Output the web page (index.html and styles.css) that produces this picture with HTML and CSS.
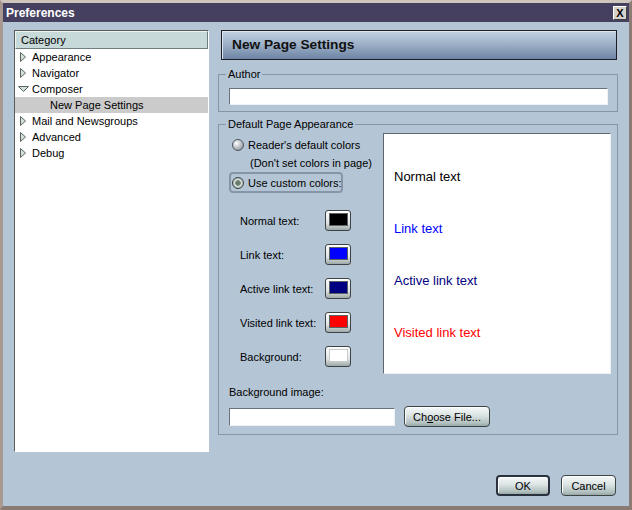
FILE: index.html
```html
<!DOCTYPE html>
<html>
<head>
<meta charset="utf-8">
<title>Preferences</title>
<link rel="stylesheet" href="styles.css">
</head>
<body>
<div class="window">
  <div class="titlebar">
    <span class="title">Preferences</span>
    <span class="close">X</span>
  </div>
  <div class="client">
    <div class="main">
      <div class="tree">
        <div class="tree-head">Category</div>
        <div class="row"><span class="twisty"><svg width="11" height="10" viewBox="0 0 11 10"><polygon points="2.5,0.5 7.5,5 2.5,9.5" fill="#d4ddd6" stroke="#56665c"/></svg></span><span>Appearance</span></div>
        <div class="row"><span class="twisty"><svg width="11" height="10" viewBox="0 0 11 10"><polygon points="2.5,0.5 7.5,5 2.5,9.5" fill="#d4ddd6" stroke="#56665c"/></svg></span><span>Navigator</span></div>
        <div class="row"><span class="twisty"><svg width="11" height="10" viewBox="0 0 11 10"><polygon points="0.5,2.5 10.5,2.5 5.5,7.5" fill="#d4ddd6" stroke="#56665c"/></svg></span><span>Composer</span></div>
        <div class="row child selected"><span>New Page Settings</span></div>
        <div class="row"><span class="twisty"><svg width="11" height="10" viewBox="0 0 11 10"><polygon points="2.5,0.5 7.5,5 2.5,9.5" fill="#d4ddd6" stroke="#56665c"/></svg></span><span>Mail and Newsgroups</span></div>
        <div class="row"><span class="twisty"><svg width="11" height="10" viewBox="0 0 11 10"><polygon points="2.5,0.5 7.5,5 2.5,9.5" fill="#d4ddd6" stroke="#56665c"/></svg></span><span>Advanced</span></div>
        <div class="row"><span class="twisty"><svg width="11" height="10" viewBox="0 0 11 10"><polygon points="2.5,0.5 7.5,5 2.5,9.5" fill="#d4ddd6" stroke="#56665c"/></svg></span><span>Debug</span></div>
      </div>
      <div class="pane">
        <div class="pane-head">New Page Settings</div>
        <fieldset class="group author">
          <legend>Author</legend>
          <div class="field author-field"></div>
        </fieldset>
        <fieldset class="group appearance">
          <legend>Default Page Appearance</legend>
          <div class="appearance-top">
            <div class="colors">
              <div class="radio-row first"><span class="radio"></span><span>Reader's default colors</span></div>
              <div class="note">(Don't set colors in page)</div>
              <div class="radio-row custom"><span class="radio on"></span><span>Use custom colors:</span></div>
              <div class="swatches">
                <span class="swatch-label">Normal text:</span><span class="swatch"><span class="chip chip-black"></span></span>
                <span class="swatch-label">Link text:</span><span class="swatch"><span class="chip chip-blue"></span></span>
                <span class="swatch-label">Active link text:</span><span class="swatch"><span class="chip chip-navy"></span></span>
                <span class="swatch-label">Visited link text:</span><span class="swatch"><span class="chip chip-red"></span></span>
                <span class="swatch-label">Background:</span><span class="swatch"><span class="chip chip-white"></span></span>
              </div>
            </div>
            <div class="preview">
              <div class="pv pv-normal">Normal text</div>
              <div class="pv pv-link">Link text</div>
              <div class="pv pv-active">Active link text</div>
              <div class="pv pv-visited">Visited link text</div>
            </div>
          </div>
          <div class="bg-label">Background image:</div>
          <div class="bg-row">
            <div class="field bg-field"></div>
            <div class="btn choose">Ch<u>o</u>ose File...</div>
          </div>
        </fieldset>
      </div>
    </div>
    <div class="footer">
      <div class="btn ok">OK</div>
      <div class="btn cancel">Cancel</div>
    </div>
  </div>
</div>
</body>
</html>
```

FILE: styles.css
```css
* { box-sizing: border-box; }
html, body { margin: 0; padding: 0; }
body {
  font-family: "Liberation Sans", Arial, sans-serif;
  font-size: 11px;
  color: #000;
  background: #b4c5d5;
}
.window {
  width: 632px;
  height: 510px;
  border-style: solid;
  border-width: 3px 3px 4px 3px;
  border-color: #cfc6be #8c7c76 #8a7a74 #a99890;
  display: flex;
  flex-direction: column;
  background: #b4c5d5;
}
.titlebar {
  height: 19px;
  background: #464060;
  display: flex;
  align-items: center;
  justify-content: space-between;
  padding: 0 2px 0 3px;
}
.title {
  color: #fff;
  font-weight: bold;
  font-size: 12px;
}
.close {
  width: 14px;
  height: 14px;
  background: #d6d2ca;
  border-top: 1px solid #fff;
  border-left: 1px solid #fff;
  border-right: 1px solid #404040;
  border-bottom: 1px solid #404040;
  font-weight: bold;
  font-size: 11px;
  line-height: 12px;
  text-align: center;
  color: #000;
}
.client {
  flex: 1;
  padding: 8px 11px 10px 11px;
  display: flex;
  flex-direction: column;
}
.main {
  height: 422px;
  display: flex;
  gap: 9px;
}
.tree {
  width: 195px;
  background: #fff;
  border-top: 1px solid #5c5c5c;
  border-left: 1px solid #5c5c5c;
  border-right: 1px solid #fff;
  border-bottom: 1px solid #fff;
}
.tree-head {
  height: 18px;
  background: #c8d9d9;
  border: 1px solid #6f7f7f;
  border-top-color: #eef4f4;
  border-left-color: #eef4f4;
  line-height: 16px;
  padding-left: 5px;
  font-size: 11px;
}
.row {
  height: 16px;
  display: flex;
  align-items: center;
  white-space: nowrap;
}
.twisty {
  width: 11px;
  height: 10px;
  margin-left: 3px;
  margin-right: 3px;
  display: flex;
}
.row.child { padding-left: 35px; }
.row.selected { background: #cbcbcb; }
.pane {
  width: 400px;
  display: flex;
  flex-direction: column;
}
.pane-head {
  height: 30px;
  margin: 0 1px 0 3px;
  border: 1px solid #1c1c22;
  background: linear-gradient(#c3d2e2, #9fb2c8 45%, #6d84a4);
  box-shadow: inset 1px 1px 0 #dbe6f0;
  font-weight: bold;
  font-size: 13.7px;
  color: #111;
  line-height: 28px;
  padding-left: 10px;
}
.group {
  margin: 0;
  border: 1px solid #8696a6;
  min-width: 0;
}
.group legend {
  padding: 0 2px;
  margin-left: -3px;
  line-height: 14px;
  font-size: 11px;
}
.author {
  margin-top: 7px;
  padding: 7px 9px 6px 10px;
}
.field {
  background: #fff;
  border-top: 1px solid #68727e;
  border-left: 1px solid #68727e;
  border-right: 1px solid #eef2f6;
  border-bottom: 1px solid #eef2f6;
}
.author-field { height: 17px; }
.appearance {
  margin-top: 5px;
  padding: 2px 5px 7px 10px;
}
.appearance-top {
  display: flex;
}
.colors {
  width: 154px;
  display: flex;
  flex-direction: column;
}
.radio-row {
  display: flex;
  align-items: center;
  gap: 4px;
  border: 2px solid transparent;
  padding-left: 1px;
  white-space: nowrap;
}
.radio-row.first {
  margin-top: 2px;
  height: 19px;
}
.radio-row.custom {
  width: 114px;
  height: 21px;
  border-color: #8696a8;
  border-radius: 4px;
}
.radio {
  width: 12px;
  height: 12px;
  border-radius: 50%;
  border: 1px solid #4e565e;
  background: radial-gradient(circle at 35% 32%, #ffffff 0, #d6dadc 30%, #9aa2a8 75%, #6a7278 100%);
  flex: none;
}
.radio.on {
  border-color: #3a4248;
  background: radial-gradient(circle, #5e7062 0, #76887a 35%, #dfe6e2 45%, #b0bab6 70%, #505a62 100%);
}
.note {
  height: 18px;
  line-height: 18px;
  padding-left: 21px;
  white-space: nowrap;
}
.swatches {
  margin-top: 17px;
  padding-left: 11px;
  display: grid;
  grid-template-columns: 85px 26px;
  grid-auto-rows: 21px;
  row-gap: 13px;
  align-items: center;
}
.swatch-label { white-space: nowrap; }
.swatch {
  width: 26px;
  height: 21px;
  border: 1px solid #3e4446;
  border-radius: 3px;
  background: linear-gradient(#ffffff, #e2e6e6 60%, #9ea8a8);
  padding: 2px 2px 4px 3px;
  display: flex;
}
.chip {
  flex: 1;
  border: 1px solid #5a6064;
}
.chip-black { background: #000; }
.chip-blue { background: #0000ff; }
.chip-navy { background: #000080; }
.chip-red { background: #ff0000; }
.chip-white { background: #fff; border-color: #c8cccc; }
.preview {
  width: 228px;
  height: 241px;
  background: #fff;
  border-top: 1px solid #5e6670;
  border-left: 1px solid #5e6670;
  border-right: 1px solid #eef2f6;
  border-bottom: 1px solid #eef2f6;
  padding: 35px 0 0 10px;
  display: flex;
  flex-direction: column;
  gap: 36px;
}
.pv {
  font-size: 13px;
  line-height: 16px;
  white-space: nowrap;
}
.pv-normal { color: #000; }
.pv-link { color: #0000ff; }
.pv-active { color: #000080; }
.pv-visited { color: #ff0000; }
.bg-label {
  margin-top: 11px;
  line-height: 14px;
}
.bg-row {
  margin-top: 7px;
  height: 21px;
  display: flex;
  align-items: center;
  gap: 9px;
}
.bg-field {
  width: 166px;
  height: 18px;
}
.btn {
  height: 21px;
  border: 1px solid #3c4446;
  border-radius: 4px;
  background: linear-gradient(#f6f9f9, #dbe3e3 45%, #b2c0c0 85%, #98a6a6);
  box-shadow: inset 1px 1px 0 #ffffff;
  display: flex;
  align-items: center;
  justify-content: center;
  font-size: 11px;
  white-space: nowrap;
}
.choose { width: 86px; }
.footer {
  margin-top: 23px;
  display: flex;
  justify-content: flex-end;
  gap: 11px;
  padding-right: 2px;
}
.ok {
  width: 54px;
  border: 2px solid #2a3240;
}
.cancel { width: 55px; }
```
